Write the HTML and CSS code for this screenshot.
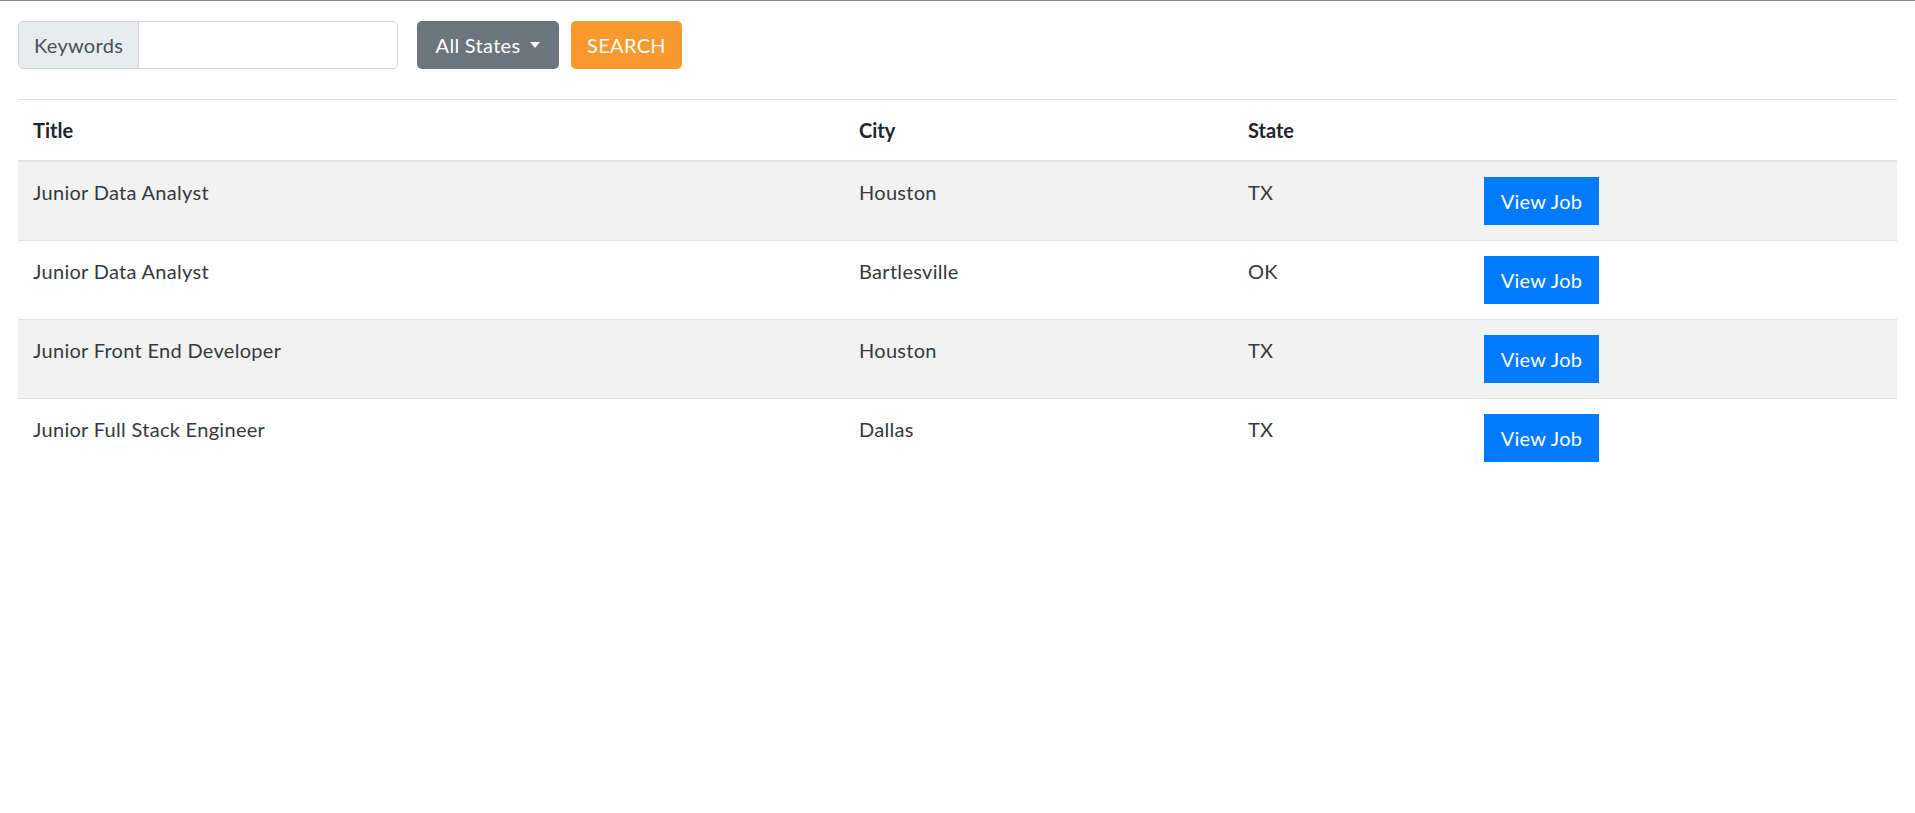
FILE: index.html
```html
<!DOCTYPE html>
<html lang="en">
<head>
    <meta charset="UTF-8">
    <meta name="viewport" content="width=device-width, initial-scale=1.0">
    <title>Jobs</title>
    <link rel="stylesheet" href="styles.css">
</head>
<body>
    <div class="page">
        <form class="search">
            <div class="input-group">
                <span class="prepend">Keywords</span>
                <input class="keywords" type="text" name="q">
            </div>
            <button class="states-btn" type="button">All States <span class="caret"></span></button>
            <button class="search-btn" type="button">SEARCH</button>
        </form>

        <table class="jobs">
            <thead>
                <tr>
                    <th class="w-title">Title</th>
                    <th class="w-city">City</th>
                    <th class="w-state">State</th>
                    <th></th>
                </tr>
            </thead>
            <tbody>
                <tr>
                    <td>Junior Data Analyst</td>
                    <td>Houston</td>
                    <td>TX</td>
                    <td><a class="view-btn" href="#">View Job</a></td>
                </tr>
                <tr>
                    <td>Junior Data Analyst</td>
                    <td>Bartlesville</td>
                    <td>OK</td>
                    <td><a class="view-btn" href="#">View Job</a></td>
                </tr>
                <tr>
                    <td>Junior Front End Developer</td>
                    <td>Houston</td>
                    <td>TX</td>
                    <td><a class="view-btn" href="#">View Job</a></td>
                </tr>
                <tr>
                    <td>Junior Full Stack Engineer</td>
                    <td>Dallas</td>
                    <td>TX</td>
                    <td><a class="view-btn" href="#">View Job</a></td>
                </tr>
            </tbody>
        </table>
    </div>
</body>
</html>
```

FILE: styles.css
```css
body{
    margin: 0;
    font-family: Lato, "Open Sans", sans-serif;
    font-size: 20px;
    letter-spacing: 0.3px;
    line-height: 30px;
    color: #212529;
    background-color: #fff;
}
.page{
    border-top: 1px solid #8a8a8a;
    padding: 20px 18px;
}
.search{
    display: flex;
    height: 48px;
    margin: 0 0 30px 0;
}
.input-group{
    display: flex;
    width: 380px;
    border: 1px solid #ced4da;
    border-radius: 5px;
    box-sizing: border-box;
    overflow: hidden;
}
.prepend{
    display: flex;
    align-items: center;
    padding: 0 15px;
    width: 123px;
    box-sizing: border-box;
    background-color: #e9ecef;
    color: #495057;
    border-right: 1px solid #ced4da;
}
.keywords{
    flex: 1;
    border: none;
    outline: none;
    font: inherit;
    padding: 0 15px;
}
.states-btn,
.search-btn{
    border: none;
    border-radius: 5px;
    color: #fff;
    font: inherit;
    letter-spacing: inherit;
    padding: 0;
    cursor: pointer;
}
.states-btn{
    margin-left: 19px;
    width: 142px;
    background-color: #6c757d;
    display: flex;
    align-items: center;
    justify-content: center;
}
.caret{
    display: inline-block;
    margin-left: 10px;
    border-top: 6px solid #fff;
    border-left: 5px solid transparent;
    border-right: 5px solid transparent;
}
.search-btn{
    margin-left: 12px;
    width: 111px;
    background-color: #f8992d;
}
.jobs{
    width: 100%;
    border-collapse: collapse;
}
.jobs th{
    text-align: left;
    font-weight: bold;
    letter-spacing: 0;
    padding: 15px;
    border-top: 1px solid #dee2e6;
    border-bottom: 2px solid #dee2e6;
}
.jobs td{
    padding: 15px;
    vertical-align: top;
    border-top: 1px solid #dee2e6;
    color: #343a40;
}
.jobs tbody tr:nth-child(odd){
    background-color: #f2f2f2;
}
.w-title{
    width: 796px;
}
.w-city{
    width: 359px;
}
.w-state{
    width: 206px;
}
.view-btn{
    display: inline-block;
    width: 115px;
    height: 48px;
    line-height: 48px;
    text-align: center;
    background-color: #007bff;
    color: #fff;
    text-decoration: none;
}
```
